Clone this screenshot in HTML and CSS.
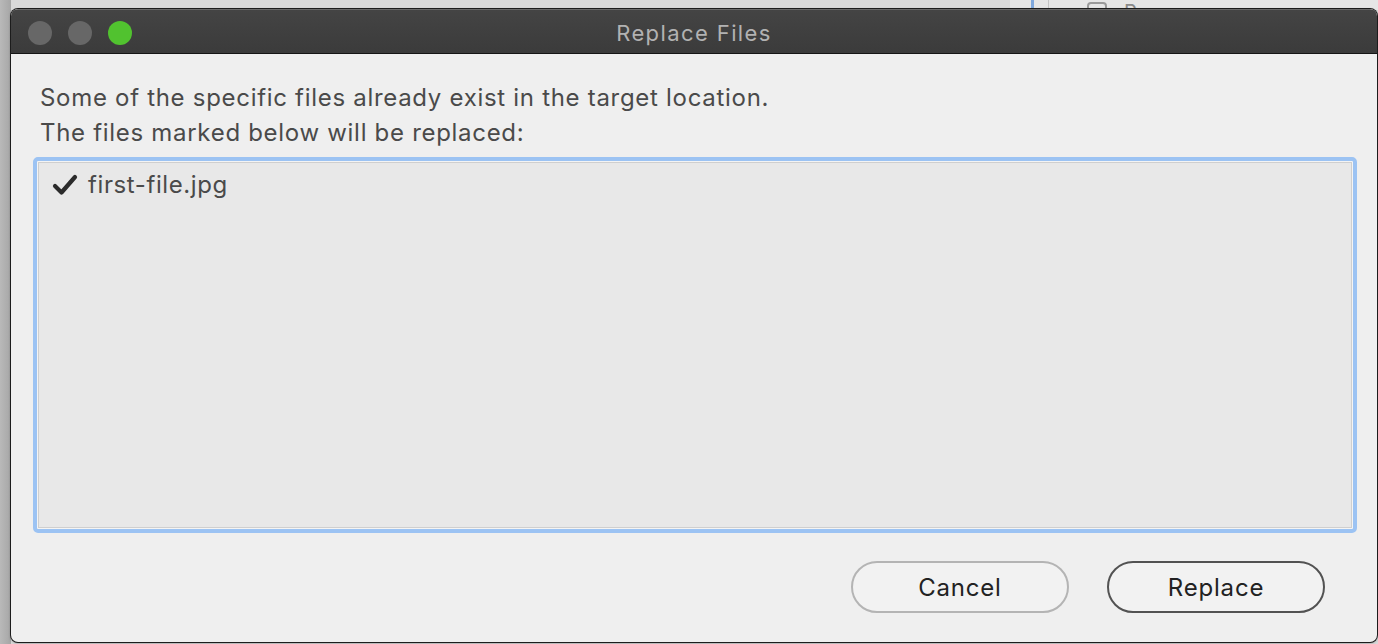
FILE: index.html
```html
<!DOCTYPE html>
<html>
<head>
<meta charset="utf-8">
<link rel="stylesheet" href="styles.css">
</head>
<body>
<div class="desktop">
  <div class="bg-window">
    <span class="bg-blue"></span>
    <span class="bg-line"></span>
    <span class="bg-check"></span>
    <span class="bg-letter">P</span>
  </div>
  <div class="window">
    <div class="titlebar">
      <div class="lights">
        <span class="light gray"></span>
        <span class="light gray"></span>
        <span class="light green"></span>
      </div>
      <div class="title">Replace Files</div>
    </div>
    <div class="content">
      <p class="message">Some of the specific files already exist in the target location.<br>The files marked below will be replaced:</p>
      <div class="list">
        <div class="list-inner">
          <div class="item">
            <svg class="check" width="26" height="22" viewBox="0 0 26 22"><path d="M3 12 L9.5 18.5 L23 3" fill="none" stroke="#2b2b2b" stroke-width="4.2" stroke-linecap="round" stroke-linejoin="round"/></svg>
            <span class="fname">first-file.jpg</span>
          </div>
        </div>
      </div>
      <div class="buttons">
        <button class="btn cancel">Cancel</button>
        <button class="btn replace">Replace</button>
      </div>
    </div>
  </div>
</div>
</body>
</html>
```

FILE: styles.css
```css
html, body {
  margin: 0;
  padding: 0;
  width: 1378px;
  height: 644px;
  overflow: hidden;
}
body {
  background: #d9d9d9;
  font-family: Inter, "Noto Sans", sans-serif;
}
.desktop {
  position: relative;
  width: 1378px;
  height: 644px;
  background: linear-gradient(to right, #b9b9b9 0, #a6a6a6 11px, #d9d9d9 11px);
  padding: 9px 0 0 11px;
  box-sizing: border-box;
}
.bg-window {
  position: absolute;
  left: 1010px;
  top: 0;
  width: 368px;
  height: 10px;
  background: #e6e6e6;
}
.bg-blue {
  position: absolute;
  left: 21px;
  top: 0;
  width: 3px;
  height: 10px;
  background: #7fa8dd;
}
.bg-line {
  position: absolute;
  left: 38px;
  top: 0;
  width: 1px;
  height: 10px;
  background: #c4c4c4;
}
.bg-check {
  position: absolute;
  left: 77px;
  top: 2px;
  width: 20px;
  height: 20px;
  border: 2px solid #9a9a9a;
  border-radius: 4px;
  box-sizing: border-box;
}
.bg-letter {
  position: absolute;
  left: 114px;
  top: 2px;
  font-size: 20px;
  line-height: 20px;
  color: #8a8a8a;
}
.window {
  position: relative;
  width: 1366px;
  height: 633px;
  background: #efefef;
  border-radius: 7px;
  box-shadow: 0 0 0 1px #1c1c1c, 0 1px 3px rgba(0,0,0,0.4);
  overflow: hidden;
  display: flex;
  flex-direction: column;
}
.titlebar {
  position: relative;
  height: 43px;
  background: linear-gradient(#444444, #3b3b3b);
  border-top: 1px solid #6a6a6a;
  border-bottom: 1px solid #151515;
  box-sizing: content-box;
  display: flex;
  align-items: center;
  justify-content: center;
  flex-shrink: 0;
}
.lights {
  position: absolute;
  left: 17px;
  top: 11px;
  display: flex;
  gap: 16px;
}
.light {
  width: 24px;
  height: 24px;
  border-radius: 50%;
}
.light.gray { background: #676767; }
.light.green { background: #51c22f; }
.title {
  color: #b2b2b2;
  font-size: 22px;
  letter-spacing: 1.4px;
  padding-top: 3px;
}
.content {
  flex: 1;
  padding: 26px 20px 0 22px;
  display: flex;
  flex-direction: column;
}
.message {
  margin: 0 0 0 7px;
  font-size: 24px;
  letter-spacing: 0.7px;
  line-height: 35px;
  color: #4a4a4a;
}
.list {
  margin-top: 7px;
  width: 1324px;
  height: 376px;
  box-sizing: border-box;
  border: 4px solid #9cc3f3;
  border-radius: 5px;
  background: #f4f4f4;
  padding: 1px;
}
.list-inner {
  height: 100%;
  box-sizing: border-box;
  border: 1px solid #cfcfcf;
  background: #e8e8e8;
  padding: 7px 13px;
}
.item {
  display: flex;
  align-items: center;
  gap: 10px;
}
.check {
  display: block;
}
.fname {
  font-size: 24px;
  letter-spacing: 0.6px;
  line-height: 30px;
  color: #4a4a4a;
}
.buttons {
  margin-top: 28px;
  display: flex;
  justify-content: flex-end;
  gap: 38px;
  padding-right: 32px;
}
.btn {
  width: 218px;
  height: 52px;
  border-radius: 26px;
  background: #f2f2f2;
  font-family: Inter, "Noto Sans", sans-serif;
  font-size: 24px;
  letter-spacing: 0.8px;
  color: #222222;
  padding: 0;
}
.btn.cancel { border: 2px solid #b4b4b4; }
.btn.replace { border: 2px solid #525252; }
```
